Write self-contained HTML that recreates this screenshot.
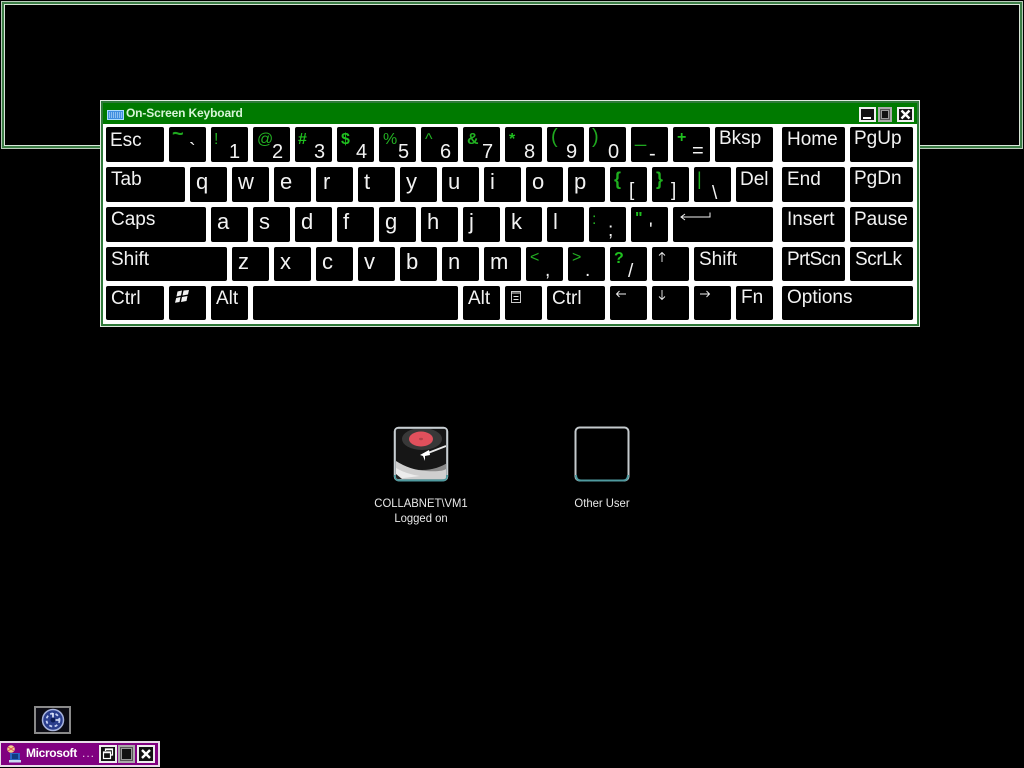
<!DOCTYPE html>
<html><head><meta charset="utf-8"><title>Logon</title>
<style>
html,body{margin:0;padding:0;background:#000;width:1024px;height:768px;overflow:hidden}
body{position:relative;font-family:"Liberation Sans",sans-serif;color:#fff;filter:blur(.3px)}
div,span,svg{position:absolute}
.k{background:#000;border-radius:2px;height:35px}
.t{font-size:19px;line-height:20px;color:#f2f2f2;white-space:nowrap}
.l{font-size:22px;line-height:24px;color:#f2f2f2}
.d{font-size:20px;line-height:22px;color:#f2f2f2}
.g{font-size:16px;line-height:18px;color:#22b022}
.gb{font-size:16px;line-height:18px;color:#1fc01f;font-weight:bold}
.g2{font-size:20px;line-height:18px;color:#1fa81f}
.g3{font-size:18px;line-height:18px;color:#1fb01f}
.u{font-size:12px;line-height:14px;color:#e8e8e8;white-space:nowrap;text-align:center;transform:scaleX(.94);transform-origin:center}
</style></head><body>

<!-- background window -->
<div style="left:1px;top:1px;width:1022px;height:148px;box-sizing:border-box;border:1px solid #b8ccba"></div>
<div style="left:2px;top:2px;width:1020px;height:146px;box-sizing:border-box;border:2px solid #3c7d46"></div>
<div style="left:4px;top:4px;width:1016px;height:142px;box-sizing:border-box;border:1px solid #d8e6d8"></div>

<!-- OSK window -->
<div style="left:100px;top:100px;width:820px;height:227px;background:#dfeadf"></div>
<div style="left:101px;top:101px;width:818px;height:225px;background:#2f7a3a"></div>
<div style="left:103px;top:103px;width:814px;height:221px;background:#fff"></div>
<div style="left:103px;top:103px;width:814px;height:21px;background:#007a00"></div>

<svg style="left:107px;top:110px" width="17" height="10" viewBox="0 0 17 10"><rect x=".5" y=".5" width="16" height="9" fill="#3f8fe0" stroke="#a8dcff"/><path d="M2 3h13M2 5h13M2 7h13" stroke="#d8f0ff" stroke-width="1" stroke-dasharray="1 1"/></svg>
<span style="left:126px;top:106px;font-size:12px;line-height:15px;font-weight:bold;color:#d6f5d6;white-space:nowrap;letter-spacing:-.15px">On-Screen Keyboard</span>

<!-- title buttons -->
<div style="left:859px;top:107px;width:17px;height:15px;box-sizing:border-box;border:2px solid #f0f0f0;background:#111"></div>
<div style="left:863px;top:117px;width:8px;height:2px;background:#fff"></div>
<div style="left:878px;top:107px;width:14px;height:15px;box-sizing:border-box;border:2px solid #aaa;background:#555"></div>
<div style="left:881px;top:110px;width:8px;height:9px;box-sizing:border-box;border:1px solid #999;background:#111"></div>
<div style="left:897px;top:107px;width:17px;height:15px;box-sizing:border-box;border:2px solid #f0f0f0;background:#111"></div>
<svg style="left:900px;top:109px" width="11" height="11" viewBox="0 0 11 11"><path d="M1.500 1.500l8 8M9.500 1.500l-8 8" stroke="#fff" stroke-width="2.400"/></svg>

<!-- Row 1 keys -->
<div class="k" style="left:106px;top:127px;width:58px"></div>
<div class="k" style="left:169px;top:127px;width:37px"></div>
<div class="k" style="left:211px;top:127px;width:37px"></div>
<div class="k" style="left:253px;top:127px;width:37px"></div>
<div class="k" style="left:295px;top:127px;width:37px"></div>
<div class="k" style="left:337px;top:127px;width:37px"></div>
<div class="k" style="left:379px;top:127px;width:37px"></div>
<div class="k" style="left:421px;top:127px;width:37px"></div>
<div class="k" style="left:463px;top:127px;width:37px"></div>
<div class="k" style="left:505px;top:127px;width:37px"></div>
<div class="k" style="left:547px;top:127px;width:37px"></div>
<div class="k" style="left:589px;top:127px;width:37px"></div>
<div class="k" style="left:631px;top:127px;width:37px"></div>
<div class="k" style="left:673px;top:127px;width:37px"></div>
<div class="k" style="left:715px;top:127px;width:58px"></div>
<div class="k" style="left:782px;top:127px;width:63px"></div>
<div class="k" style="left:850px;top:127px;width:63px"></div>
<!-- Row 2 keys -->
<div class="k" style="left:106px;top:167px;width:79px"></div>
<div class="k" style="left:190px;top:167px;width:37px"></div>
<div class="k" style="left:232px;top:167px;width:37px"></div>
<div class="k" style="left:274px;top:167px;width:37px"></div>
<div class="k" style="left:316px;top:167px;width:37px"></div>
<div class="k" style="left:358px;top:167px;width:37px"></div>
<div class="k" style="left:400px;top:167px;width:37px"></div>
<div class="k" style="left:442px;top:167px;width:37px"></div>
<div class="k" style="left:484px;top:167px;width:37px"></div>
<div class="k" style="left:526px;top:167px;width:37px"></div>
<div class="k" style="left:568px;top:167px;width:37px"></div>
<div class="k" style="left:610px;top:167px;width:37px"></div>
<div class="k" style="left:652px;top:167px;width:37px"></div>
<div class="k" style="left:694px;top:167px;width:37px"></div>
<div class="k" style="left:736px;top:167px;width:37px"></div>
<div class="k" style="left:782px;top:167px;width:63px"></div>
<div class="k" style="left:850px;top:167px;width:63px"></div>
<!-- Row 3 keys -->
<div class="k" style="left:106px;top:207px;width:100px"></div>
<div class="k" style="left:211px;top:207px;width:37px"></div>
<div class="k" style="left:253px;top:207px;width:37px"></div>
<div class="k" style="left:295px;top:207px;width:37px"></div>
<div class="k" style="left:337px;top:207px;width:37px"></div>
<div class="k" style="left:379px;top:207px;width:37px"></div>
<div class="k" style="left:421px;top:207px;width:37px"></div>
<div class="k" style="left:463px;top:207px;width:37px"></div>
<div class="k" style="left:505px;top:207px;width:37px"></div>
<div class="k" style="left:547px;top:207px;width:37px"></div>
<div class="k" style="left:589px;top:207px;width:37px"></div>
<div class="k" style="left:631px;top:207px;width:37px"></div>
<div class="k" style="left:673px;top:207px;width:100px"></div>
<div class="k" style="left:782px;top:207px;width:63px"></div>
<div class="k" style="left:850px;top:207px;width:63px"></div>
<!-- Row 4 keys -->
<div class="k" style="left:106px;top:247px;width:121px;height:34px"></div>
<div class="k" style="left:232px;top:247px;width:37px;height:34px"></div>
<div class="k" style="left:274px;top:247px;width:37px;height:34px"></div>
<div class="k" style="left:316px;top:247px;width:37px;height:34px"></div>
<div class="k" style="left:358px;top:247px;width:37px;height:34px"></div>
<div class="k" style="left:400px;top:247px;width:37px;height:34px"></div>
<div class="k" style="left:442px;top:247px;width:37px;height:34px"></div>
<div class="k" style="left:484px;top:247px;width:37px;height:34px"></div>
<div class="k" style="left:526px;top:247px;width:37px;height:34px"></div>
<div class="k" style="left:568px;top:247px;width:37px;height:34px"></div>
<div class="k" style="left:610px;top:247px;width:37px;height:34px"></div>
<div class="k" style="left:652px;top:247px;width:37px;height:34px"></div>
<div class="k" style="left:694px;top:247px;width:79px;height:34px"></div>
<div class="k" style="left:782px;top:247px;width:63px;height:34px"></div>
<div class="k" style="left:850px;top:247px;width:63px;height:34px"></div>
<!-- Row 5 keys -->
<div class="k" style="left:106px;top:286px;width:58px;height:34px"></div>
<div class="k" style="left:169px;top:286px;width:37px;height:34px"></div>
<div class="k" style="left:211px;top:286px;width:37px;height:34px"></div>
<div class="k" style="left:253px;top:286px;width:205px;height:34px"></div>
<div class="k" style="left:463px;top:286px;width:37px;height:34px"></div>
<div class="k" style="left:505px;top:286px;width:37px;height:34px"></div>
<div class="k" style="left:547px;top:286px;width:58px;height:34px"></div>
<div class="k" style="left:610px;top:286px;width:37px;height:34px"></div>
<div class="k" style="left:652px;top:286px;width:37px;height:34px"></div>
<div class="k" style="left:694px;top:286px;width:37px;height:34px"></div>
<div class="k" style="left:736px;top:286px;width:37px;height:34px"></div>
<div class="k" style="left:782px;top:286px;width:131px;height:34px"></div>

<!-- Row 1 labels -->
<span class="t" style="left:110px;top:131px">Esc</span>
<span class="g2" style="left:172px;top:125px;font-weight:bold">~</span>
<span class="d" style="left:189px;top:140px">`</span>
<span class="g" style="left:214px;top:131px">!</span>
<span class="d" style="left:229px;top:141px">1</span>
<span class="g" style="left:257px;top:131px">@</span>
<span class="d" style="left:272px;top:141px">2</span>
<span class="gb" style="left:298px;top:131px">#</span>
<span class="d" style="left:314px;top:141px">3</span>
<span class="gb" style="left:341px;top:131px">$</span>
<span class="d" style="left:356px;top:141px">4</span>
<span class="g" style="left:383px;top:131px">%</span>
<span class="d" style="left:398px;top:141px">5</span>
<span class="g" style="left:425px;top:131px">^</span>
<span class="d" style="left:440px;top:141px">6</span>
<span class="g" style="left:467px;top:131px;font-weight:bold">&amp;</span>
<span class="d" style="left:482px;top:141px">7</span>
<span class="gb" style="left:509px;top:131px">*</span>
<span class="d" style="left:524px;top:141px">8</span>
<span class="g2" style="left:551px;top:128px">(</span>
<span class="d" style="left:566px;top:141px">9</span>
<span class="g2" style="left:592px;top:128px">)</span>
<span class="d" style="left:608px;top:141px">0</span>
<span class="g2" style="left:635px;top:127px">_</span>
<span class="d" style="left:649px;top:143px">-</span>
<span class="gb" style="left:677px;top:129px">+</span>
<span class="d" style="left:692px;top:140px">=</span>
<span class="t" style="left:719px;top:129px">Bksp</span>
<span class="t" style="left:787px;top:130px">Home</span>
<span class="t" style="left:854px;top:129px">PgUp</span>
<!-- Row 2 labels -->
<span class="t" style="left:111px;top:170px">Tab</span>
<span class="l" style="left:196px;top:170px">q</span>
<span class="l" style="left:238px;top:170px">w</span>
<span class="l" style="left:280px;top:170px">e</span>
<span class="l" style="left:323px;top:170px">r</span>
<span class="l" style="left:364px;top:170px">t</span>
<span class="l" style="left:406px;top:170px">y</span>
<span class="l" style="left:448px;top:170px">u</span>
<span class="l" style="left:490px;top:170px">i</span>
<span class="l" style="left:532px;top:170px">o</span>
<span class="l" style="left:574px;top:170px">p</span>
<span class="g3" style="left:614px;top:170px;font-weight:bold">{</span>
<span class="t" style="left:629px;top:181px">[</span>
<span class="g3" style="left:656px;top:170px;font-weight:bold">}</span>
<span class="t" style="left:671px;top:181px">]</span>
<span class="g3" style="left:697px;top:170px">|</span>
<span class="t" style="left:712px;top:184px">\</span>
<span class="t" style="left:740px;top:170px">Del</span>
<span class="t" style="left:787px;top:170px">End</span>
<span class="t" style="left:854px;top:169px">PgDn</span>
<!-- Row 3 labels -->
<span class="t" style="left:111px;top:210px">Caps</span>
<span class="l" style="left:217px;top:210px">a</span>
<span class="l" style="left:259px;top:210px">s</span>
<span class="l" style="left:301px;top:210px">d</span>
<span class="l" style="left:343px;top:210px">f</span>
<span class="l" style="left:385px;top:210px">g</span>
<span class="l" style="left:427px;top:210px">h</span>
<span class="l" style="left:469px;top:210px">j</span>
<span class="l" style="left:511px;top:210px">k</span>
<span class="l" style="left:553px;top:210px">l</span>
<span class="g" style="left:592px;top:211px">:</span>
<span class="t" style="left:608px;top:221px">;</span>
<span class="gb" style="left:635px;top:210px">"</span>
<span class="t" style="left:649px;top:221px">'</span>
<svg style="left:678px;top:210px" width="34" height="12" viewBox="0 0 34 12"><path d="M32 2.500v4.500H3M7 4L3 7l4 3" fill="none" stroke="#f2f2f2" stroke-width="1"/></svg>
<span class="t" style="left:787px;top:210px">Insert</span>
<span class="t" style="left:854px;top:210px">Pause</span>
<!-- Row 4 labels -->
<span class="t" style="left:111px;top:250px">Shift</span>
<span class="l" style="left:238px;top:250px">z</span>
<span class="l" style="left:280px;top:250px">x</span>
<span class="l" style="left:322px;top:250px">c</span>
<span class="l" style="left:364px;top:250px">v</span>
<span class="l" style="left:406px;top:250px">b</span>
<span class="l" style="left:448px;top:250px">n</span>
<span class="l" style="left:490px;top:250px">m</span>
<span class="g" style="left:530px;top:249px">&lt;</span>
<span class="t" style="left:545px;top:261px">,</span>
<span class="g" style="left:572px;top:249px">&gt;</span>
<span class="t" style="left:585px;top:261px">.</span>
<span class="gb" style="left:614px;top:250px">?</span>
<span class="t" style="left:628px;top:262px">/</span>
<svg style="left:656px;top:251px" width="12" height="12" viewBox="0 0 12 12"><path d="M6 11V1.500M3 4.500L6 1.500 9 4.500" fill="none" stroke="#f2f2f2" stroke-width=".9"/></svg>
<span class="t" style="left:699px;top:250px">Shift</span>
<span class="t" style="left:787px;top:250px;letter-spacing:-.6px">PrtScn</span>
<span class="t" style="left:855px;top:250px;letter-spacing:-.4px">ScrLk</span>
<!-- Row 5 labels -->
<span class="t" style="left:111px;top:289px">Ctrl</span>
<svg style="left:175px;top:290px" width="15" height="13" viewBox="0 0 15 13"><g fill="#f2f2f2"><path d="M2.500 1.500L7 .5 6 5.500 1.500 6.500z"/><path d="M8.500.5L14 0 13 4.500 7.500 5.500z"/><path d="M1.200 8L5.500 7 4.500 12 0 12.800z"/><path d="M7 7L12.500 6 11.500 11 6 12z"/></g></svg>
<span class="t" style="left:216px;top:289px">Alt</span>
<span class="t" style="left:468px;top:289px">Alt</span>
<svg style="left:510px;top:290px" width="12" height="14" viewBox="0 0 12 14"><rect x="1.500" y="1.500" width="9" height="11" fill="none" stroke="#e0e0e0" stroke-width=".9"/><path d="M1.500 3h9M3.500 6.500h5M3.500 9.500h5" stroke="#e0e0e0" stroke-width=".9"/></svg>
<span class="t" style="left:552px;top:289px">Ctrl</span>
<svg style="left:615px;top:288px" width="12" height="12" viewBox="0 0 12 12"><path d="M11 6H1.500M4.500 3L1.500 6 4.500 9" fill="none" stroke="#f2f2f2" stroke-width=".9"/></svg>
<svg style="left:656px;top:289px" width="12" height="12" viewBox="0 0 12 12"><path d="M6 1v9.500M3 7.500L6 10.500 9 7.500" fill="none" stroke="#f2f2f2" stroke-width=".9"/></svg>
<svg style="left:699px;top:288px" width="12" height="12" viewBox="0 0 12 12"><path d="M1 6h9.500M7.500 3L10.500 6 7.500 9" fill="none" stroke="#f2f2f2" stroke-width=".9"/></svg>
<span class="t" style="left:741px;top:288px">Fn</span>
<span class="t" style="left:787px;top:288px">Options</span>

<!-- User tile 1 -->
<svg style="left:392px;top:425px" width="58" height="58" viewBox="0 0 58 58">
<defs><clipPath id="c"><rect x="4" y="4" width="50" height="50" rx="2"/></clipPath></defs>
<rect x="2.500" y="2.500" width="53" height="53" rx="4" fill="#9aa2a6" stroke="#c8ced2" stroke-width="1.500"/>
<path d="M3 50q0 5.500 5 5.500h42q5 0 5-5.500" fill="none" stroke="#4f9a9f" stroke-width="2"/>
<g clip-path="url(#c)">
<rect x="4" y="4" width="50" height="50" fill="#8a8a8a"/>
<rect x="4" y="4" width="50" height="14" fill="#4c4c4c"/>
<ellipse cx="30" cy="17" rx="38" ry="28" fill="#161616"/>
<ellipse cx="30" cy="14" rx="20" ry="11" fill="#383838"/>
<ellipse cx="29" cy="14" rx="12" ry="7.500" fill="#e0505c"/>
<ellipse cx="29" cy="14" rx="2" ry="1.200" fill="#b04048"/>
<path d="M4 36q14 9 30 10t20-2v10H4z" fill="#cfcfcf"/>
<path d="M4 43q10 6 24 8l-24 3z" fill="#ececec"/>
<path d="M4 49l6 5H4z" fill="#222"/>
<path d="M54 21L36 28" stroke="#e8e8e8" stroke-width="1.800"/>
<path d="M28 30l9-5 1 5-5 1 0 5-2-5z" fill="#fff"/>
</g>
</svg>
<div class="u" style="left:361px;top:496px;width:120px">COLLABNET\VM1</div>
<div class="u" style="left:361px;top:511px;width:120px">Logged on</div>

<!-- User tile 2 -->
<svg style="left:573px;top:425px" width="58" height="58" viewBox="0 0 58 58">
<rect x="2.500" y="2.500" width="53" height="53" rx="4" fill="#000" stroke="#c4cacd" stroke-width="2"/>
<path d="M3 50q0 5.500 5 5.500h42q5 0 5-5.500" fill="none" stroke="#4f9a9f" stroke-width="2"/>
</svg>
<div class="u" style="left:542px;top:496px;width:120px">Other User</div>

<!-- Clock button -->
<div style="left:34px;top:706px;width:37px;height:28px;box-sizing:border-box;border:2px solid #8a8a8a;background:#0c0c14"></div>
<svg style="left:40px;top:707px" width="26" height="26" viewBox="0 0 26 26">
<circle cx="13" cy="13" r="10.500" fill="#2a3d8c" stroke="#a8b4de" stroke-width="1.500"/>
<circle cx="13" cy="13" r="6.500" fill="none" stroke="#c4d0f4" stroke-width="1.800" stroke-dasharray="3 2.500"/>
<path d="M13 6v7h6" fill="none" stroke="#e8eeff" stroke-width="1.600"/>
<circle cx="13" cy="13" r="2.500" fill="#0b1a55"/>
</svg>

<!-- Minimized window -->
<div style="left:0;top:741px;width:160px;height:26px;background:#e8dce8"></div>
<div style="left:1px;top:743px;width:157px;height:22px;background:#800080"></div>
<svg style="left:5px;top:744px" width="17" height="20" viewBox="0 0 17 20">
<circle cx="6" cy="5" r="3.800" fill="#f0d090"/><path d="M3 3l6 4M9 3L3 7" stroke="#e05050"/>
<rect x="5" y="9" width="10" height="9" fill="#2a62c0"/><rect x="7" y="10" width="6" height="5" fill="#103a80"/>
<rect x="4" y="16" width="12" height="2.500" fill="#c8d8f0"/>
</svg>
<span style="left:26px;top:746px;font-size:12px;line-height:15px;font-weight:bold;color:#fff;white-space:nowrap;letter-spacing:-.35px">Microsoft</span>
<span style="left:82px;top:746px;font-size:12px;line-height:15px;color:#e8c8e8;white-space:nowrap;letter-spacing:1px">...</span>
<div style="left:99px;top:745px;width:18px;height:18px;box-sizing:border-box;border:2px solid #eee;background:#111"></div>
<svg style="left:102px;top:748px" width="12" height="12" viewBox="0 0 12 12"><path d="M3.500 3V1h7v6h-2" fill="none" stroke="#fff" stroke-width="1.200"/><path d="M3 1.500h7" stroke="#fff" stroke-width="1.500"/><rect x="1.500" y="4" width="7" height="6.500" fill="none" stroke="#fff" stroke-width="1.200"/><path d="M1.500 4.500h7" stroke="#fff" stroke-width="1.500"/></svg>
<div style="left:118px;top:745px;width:17px;height:18px;box-sizing:border-box;border:2px solid #aaa;background:#555"></div>
<div style="left:121px;top:748px;width:11px;height:12px;box-sizing:border-box;border:1px solid #999;background:#111"></div>
<div style="left:137px;top:745px;width:18px;height:18px;box-sizing:border-box;border:2px solid #eee;background:#111"></div>
<svg style="left:141px;top:749px" width="10" height="10" viewBox="0 0 10 10"><path d="M1 1l8 8M9 1l-8 8" stroke="#fff" stroke-width="2.400"/></svg>

</body></html>
